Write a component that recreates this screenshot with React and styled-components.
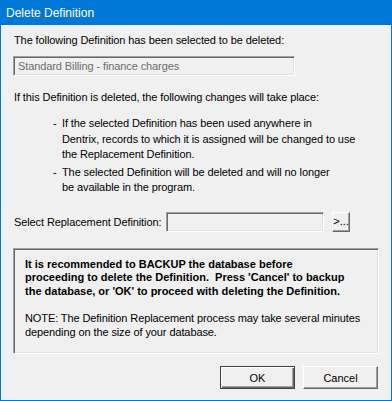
import React from 'react';
import styled, { createGlobalStyle } from 'styled-components';

const Global = createGlobalStyle`
  html, body { margin: 0; padding: 0; background: #f0f0f0; }
  body { font-family: "Liberation Sans", Arial, sans-serif; }
`;

const Window = styled.div`
  width: 392px;
  height: 401px;
  box-sizing: border-box;
  border: 1px solid #0078d7;
  border-top: none;
  background: #f0f0f0;
  display: flex;
  flex-direction: column;
  font-family: "Liberation Sans", Arial, sans-serif;
  font-size: 11px;
  color: #000;
`;

const TitleBar = styled.div`
  height: 25px;
  margin: 0 -1px;
  background: #0078d7;
  color: #fff;
  font-family: "Liberation Sans", Arial, sans-serif;
  font-size: 12px;
  display: flex;
  align-items: center;
  padding-left: 6px;
`;

const Body = styled.div`
  flex: 1;
  display: flex;
  flex-direction: column;
  padding: 0 12px 0 12px;
`;

const Label = styled.div`
  margin: ${p => p.$mt || 0}px 0 0 1px;
  line-height: 13px;
  white-space: nowrap;
  letter-spacing: -0.1px;
`;

const Field = styled.div`
  width: ${p => p.$w}px;
  height: 20px;
  box-sizing: border-box;
  border-style: solid;
  border-width: 1px;
  border-color: #a0a0a0 #ffffff #ffffff #a0a0a0;
  box-shadow: inset 1px 1px 0 #696969, inset -1px -1px 0 #e3e3e3;
  color: #6d6d6d;
  padding-left: 4px;
  display: flex;
  align-items: center;
  margin-top: ${p => p.$mt || 0}px;
  white-space: nowrap;
  letter-spacing: -0.1px;
`;

const Bullets = styled.div`
  margin: 12px 0 0 40px;
  display: grid;
  grid-template-columns: 9px auto;
  row-gap: 2px;
  line-height: 15.5px;
  letter-spacing: -0.1px;
`;

const Dash = styled.span``;

const BulletText = styled.span``;

const SelectRow = styled.div`
  margin-top: 16px;
  display: flex;
  align-items: center;
`;

const SelectLabel = styled.span`
  width: 152px;
  padding-left: 1px;
  white-space: nowrap;
  letter-spacing: -0.1px;
`;

const SmallButton = styled.div`
  width: 18px;
  height: 20px;
  margin-left: 8px;
  box-sizing: border-box;
  border-style: solid;
  border-width: 1px;
  border-color: #ffffff #696969 #696969 #ffffff;
  box-shadow: inset -1px -1px 0 #a0a0a0;
  display: flex;
  align-items: center;
  justify-content: center;
  font-size: 11px;
  padding-bottom: 1px;
`;

const NoteBox = styled.div`
  margin-top: 16px;
  width: 366px;
  height: 106px;
  box-sizing: border-box;
  border-style: solid;
  border-width: 1px;
  border-color: #a0a0a0 #ffffff #ffffff #a0a0a0;
  box-shadow: inset 1px 1px 0 #696969, inset -1px -1px 0 #e3e3e3;
  padding: 9px 8px 0 11px;
  line-height: 13.5px;
`;

const Warning = styled.p`
  margin: 0;
  font-weight: bold;
  white-space: pre;
`;

const Note = styled.p`
  margin: 14px 0 0 0;
  white-space: pre;
  letter-spacing: -0.1px;
`;

const Footer = styled.div`
  margin-top: auto;
  margin-bottom: 11px;
  margin-right: 1px;
  display: flex;
  justify-content: flex-end;
  gap: 8px;
`;

const Button = styled.div`
  width: 75px;
  height: 23px;
  box-sizing: border-box;
  border-style: solid;
  border-width: 1px;
  border-color: ${p => p.$default ? '#404040' : '#ffffff #696969 #696969 #ffffff'};
  box-shadow: ${p => p.$default
    ? 'inset 1px 1px 0 #ffffff, inset -1px -1px 0 #696969, inset -2px -2px 0 #a0a0a0'
    : 'inset -1px -1px 0 #a0a0a0'};
  display: flex;
  align-items: center;
  justify-content: center;
  font-size: 11px;
`;

export default function App() {
  return (
    <>
      <Global />
      <Window>
        <TitleBar>Delete Definition</TitleBar>
        <Body>
          <Label $mt={9}>The following Definition has been selected to be deleted:</Label>
          <Field $w={282} $mt={9}>Standard Billing - finance charges</Field>
          <Label $mt={15}>If this Definition is deleted, the following changes will take place:</Label>
          <Bullets>
            <Dash>-</Dash>
            <BulletText>
              If the selected Definition has been used anywhere in<br />
              Dentrix, records to which it is assigned will be changed to use<br />
              the Replacement Definition.
            </BulletText>
            <Dash>-</Dash>
            <BulletText>
              The selected Definition will be deleted and will no longer<br />
              be available in the program.
            </BulletText>
          </Bullets>
          <SelectRow>
            <SelectLabel>Select Replacement Definition:</SelectLabel>
            <Field $w={158} />
            <SmallButton>&gt;...</SmallButton>
          </SelectRow>
          <NoteBox>
            <Warning>{"It is recommended to BACKUP the database before\nproceeding to delete the Definition.  Press 'Cancel' to backup\nthe database, or 'OK' to proceed with deleting the Definition."}</Warning>
            <Note>{"NOTE: The Definition Replacement process may take several minutes\ndepending on the size of your database."}</Note>
          </NoteBox>
          <Footer>
            <Button $default>OK</Button>
            <Button>Cancel</Button>
          </Footer>
        </Body>
      </Window>
    </>
  );
}
